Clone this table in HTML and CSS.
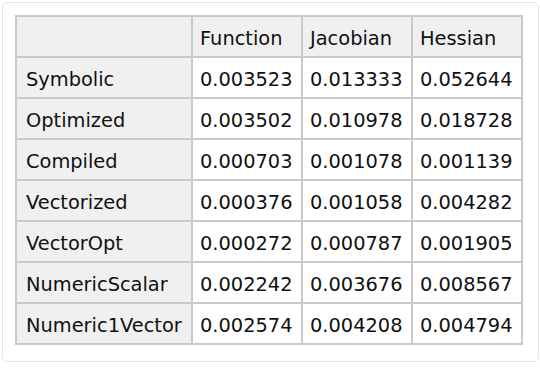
FILE: index.html
```html
<!DOCTYPE html>
<html>
<head>
<meta charset="utf-8">
<link rel="stylesheet" href="styles.css">
</head>
<body>
<div class="card">
  <table class="grid">
    <colgroup>
      <col class="c-label">
      <col class="c-num">
      <col class="c-num">
      <col class="c-num">
    </colgroup>
    <tr class="head"><th></th><th>Function</th><th>Jacobian</th><th>Hessian</th></tr>
    <tr><th>Symbolic</th><td>0.003523</td><td>0.013333</td><td>0.052644</td></tr>
    <tr><th>Optimized</th><td>0.003502</td><td>0.010978</td><td>0.018728</td></tr>
    <tr><th>Compiled</th><td>0.000703</td><td>0.001078</td><td>0.001139</td></tr>
    <tr><th>Vectorized</th><td>0.000376</td><td>0.001058</td><td>0.004282</td></tr>
    <tr><th>VectorOpt</th><td>0.000272</td><td>0.000787</td><td>0.001905</td></tr>
    <tr><th>NumericScalar</th><td>0.002242</td><td>0.003676</td><td>0.008567</td></tr>
    <tr><th>Numeric1Vector</th><td>0.002574</td><td>0.004208</td><td>0.004794</td></tr>
  </table>
</div>
</body>
</html>
```

FILE: styles.css
```css
html, body {
  margin: 0;
  padding: 0;
  background: #ffffff;
}
body {
  padding: 2px 0 0 2px;
  font-family: "DejaVu Sans", Verdana, sans-serif;
  color: #111111;
}
.card {
  width: 510px;
  padding: 12px 13px 16px 12px;
  border: 1px solid #e6e6e6;
  border-radius: 5px;
  background: #ffffff;
}
.grid {
  border-collapse: collapse;
  table-layout: fixed;
  width: 508px;
  font-size: 19.4px;
}
.c-label { width: 176px; }
.c-num { width: 110px; }
.grid th, .grid td {
  border: 2px solid #c9c9c9;
  height: 35px;
  padding: 4px 0 0 7px;
  text-align: left;
  font-weight: normal;
  white-space: nowrap;
  vertical-align: middle;
  background: #ffffff;
}
.grid th {
  background: #f0f0f0;
  padding-left: 9px;
}
.grid .head th {
  padding-left: 7px;
}
```
